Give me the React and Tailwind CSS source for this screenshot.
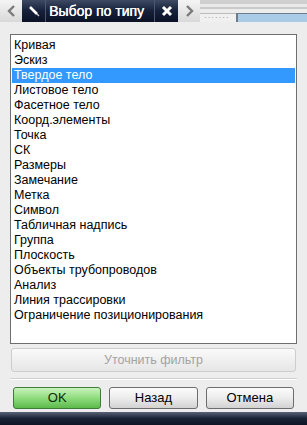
const items = [
  'Кривая',
  'Эскиз',
  'Твердое тело',
  'Листовое тело',
  'Фасетное тело',
  'Коорд.элементы',
  'Точка',
  'СК',
  'Размеры',
  'Замечание',
  'Метка',
  'Символ',
  'Табличная надпись',
  'Группа',
  'Плоскость',
  'Объекты трубопроводов',
  'Анализ',
  'Линия трассировки',
  'Ограничение позиционирования',
]

function Btn({ children, green }) {
  return (
    <div
      className={
        'flex-1 h-[22px] flex items-center justify-center rounded-[3px] border text-[13px] ' +
        (green
          ? 'border-[#3f7a3a] bg-gradient-to-b from-[#c9f3bd] via-[#8fdc7e] to-[#5cba4c] text-[#0d2a08]'
          : 'border-[#6d6d6d] bg-gradient-to-b from-[#fbfbfb] via-[#ececec] to-[#d2d2d2] text-black')
      }
    >
      {children}
    </div>
  )
}

export default function App() {
  return (
    <div className="w-[307px] h-[425px] bg-[#ededed] flex flex-col overflow-hidden font-['Liberation_Sans',Arial,sans-serif]">
      {/* tab strip */}
      <div className="h-[22px] flex shrink-0">
        <div className="w-[22px] bg-gradient-to-b from-[#f4f4f4] to-[#d9d9d9] flex items-center justify-center">
          <svg width="9" height="12" viewBox="0 0 9 12">
            <path d="M7 1 L2 6 L7 11" stroke="#7a7a7a" strokeWidth="2.4" fill="none" />
          </svg>
        </div>
        <div className="w-[156px] bg-gradient-to-b from-[#3e4a63] via-[#16203a] to-[#0b1226] flex items-center">
          <div className="w-[24px] h-full flex items-center justify-center border-r border-[#4b5670]">
            <svg width="14" height="14" viewBox="0 0 14 14">
              <path d="M3 3 L10 10" stroke="#ffffff" strokeWidth="2.6" />
              <path d="M10 10 L12 12" stroke="#c8c8c8" strokeWidth="1.4" />
            </svg>
          </div>
          <span className="pl-[3px] text-white text-[14px] leading-none w-[108px] whitespace-nowrap [text-shadow:0.4px_0_0_#fff]">Выбор по типу</span>
          <div className="h-full flex-1 flex items-center justify-center border-l border-[#4b5670]">
            <svg width="12" height="12" viewBox="0 0 12 12">
              <path d="M2 2 L10 10 M10 2 L2 10" stroke="#ffffff" strokeWidth="3" />
            </svg>
          </div>
        </div>
        <div className="w-[22px] bg-gradient-to-b from-[#f4f4f4] to-[#d9d9d9] flex items-center justify-center">
          <svg width="9" height="12" viewBox="0 0 9 12">
            <path d="M2 1 L7 6 L2 11" stroke="#7a7a7a" strokeWidth="2.4" fill="none" />
          </svg>
        </div>
        <div className="flex-1 flex flex-col bg-[#e2e2e2]">
          <div className="h-[4px] bg-[#cfcfcf]" />
          <div className="h-[3px] bg-[#e9e9e9]" />
          <div className="h-[3px] bg-[#c9c9c9]" />
          <div className="h-[4px] bg-[#ececec]" />
          <div className="flex-1 flex">
            <div className="w-[36px] bg-[#f0f0f0] border-t border-[#bcbcbc] flex items-center pl-[4px] text-[#888] text-[8px] tracking-[1px] leading-none">
              ·······
            </div>
            <div className="flex-1 bg-[#a9cbe6] border-l-2 border-t border-[#6b7c8d]" />
          </div>
        </div>
      </div>

      {/* body */}
      <div className="flex-1 flex flex-col pl-[10px] pr-[10px] pt-[12px]">
        <div className="h-[310px] bg-white border border-[#6e6e6e] pt-[3px] pl-[1px] pr-[1px]">
          {items.map((t, i) => (
            <div
              key={t}
              className={
                'h-[15px] pl-[2px] text-[12.5px] leading-[15px] whitespace-nowrap ' +
                (i === 2 ? 'bg-[#3399ff] text-white' : 'text-black')
              }
            >
              {t}
            </div>
          ))}
        </div>
        <div className="mt-[4px] h-[24px] mx-[1px] rounded-[3px] border border-[#cdcdcd] bg-gradient-to-b from-[#fafafa] to-[#e6e6e6] flex items-center justify-center text-[12.5px] text-[#a3a3a3]">
          Уточнить фильтр
        </div>
        <div className="mt-[6px] border-t border-[#d0d0d0] border-b border-b-white" />
        <div className="mt-[7px] flex gap-[8px] px-[3px]">
          <Btn green>OK</Btn>
          <Btn>Назад</Btn>
          <Btn>Отмена</Btn>
        </div>
      </div>
      <div className="h-[13px] shrink-0 bg-gradient-to-b from-[#5a6478] via-[#1a2236] to-[#0e1424]" />
    </div>
  )
}
